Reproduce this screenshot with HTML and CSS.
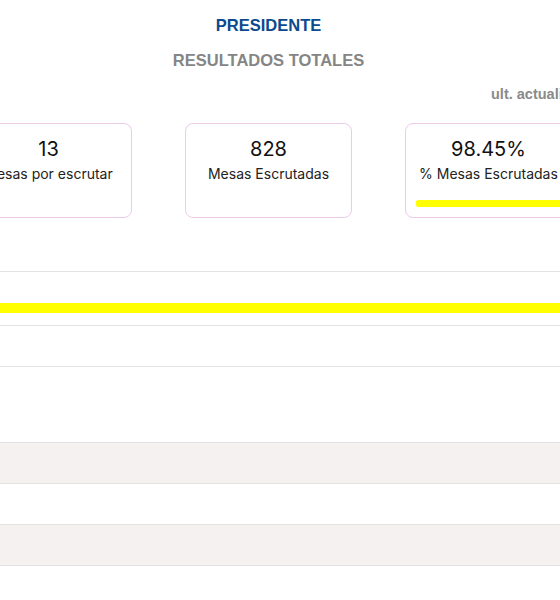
FILE: index.html
```
<!DOCTYPE html>
<html lang="es">
<head>
    <meta charset="UTF-8">
    <meta name="viewport" content="width=device-width, initial-scale=1.0">
    <title>Resultados Presidente</title>
    <link rel="stylesheet" href="styles.css">
</head>
<body>
    <div class="page">
        <h1 class="title">PRESIDENTE</h1>
        <h2 class="subtitle">RESULTADOS TOTALES</h2>
        <div class="updated">ult. actualización</div>

        <div class="cards">
            <div class="card">
                <div class="card-value">13</div>
                <div class="card-label">Mesas por escrutar</div>
            </div>
            <div class="card">
                <div class="card-value">828</div>
                <div class="card-label">Mesas Escrutadas</div>
            </div>
            <div class="card">
                <div class="card-value">98.45%</div>
                <div class="card-label">% Mesas Escrutadas</div>
                <div class="progress"><div class="progress-fill" style="width: 98.45%"></div></div>
            </div>
        </div>

        <div class="results">
            <div class="row row-bar"><div class="bar" style="width: 100%"></div></div>
            <div class="row"></div>
            <div class="row row-tall"></div>
            <div class="row shaded"></div>
            <div class="row"></div>
            <div class="row shaded"></div>
            <div class="row"></div>
        </div>
    </div>
</body>
</html>
```
FILE: styles.css
```
html, body {
    margin: 0;
    overflow: hidden;
    background: #fff;
}

body {
    font-family: "Liberation Sans", Arial, sans-serif;
    color: #111;
}

.page {
    width: 607px;
    margin-left: -35px;
}

.title {
    margin: 0;
    padding-top: 15px;
    font-size: 16.5px;
    line-height: 20px;
    font-weight: bold;
    color: #0b4a8e;
    text-align: center;
}

.subtitle {
    margin: 15px 0 0;
    font-size: 16.5px;
    line-height: 20px;
    font-weight: bold;
    color: #858585;
    text-align: center;
}

.updated {
    margin-top: 15px;
    padding-left: 526px;
    font-size: 14.5px;
    line-height: 18px;
    font-weight: bold;
    color: #8a8a8a;
    white-space: nowrap;
}

.cards {
    display: flex;
    justify-content: center;
    gap: 53px;
    margin-top: 20px;
}

.card {
    box-sizing: border-box;
    width: 167px;
    height: 95px;
    padding: 12px 8px 0;
    border: 1px solid #eccaea;
    border-radius: 8px;
    text-align: center;
    font-family: Inter, "Noto Sans", sans-serif;
}

.card-value {
    font-size: 20px;
    line-height: 26px;
    color: #111;
}

.card-label {
    font-size: 14px;
    line-height: 24px;
    color: #222;
    white-space: nowrap;
}

.progress {
    margin-top: 14px;
    margin-left: 2px;
    height: 7px;
    border-radius: 2px;
    overflow: hidden;
}

.progress-fill {
    height: 100%;
    background: #ffff00;
}

.results {
    margin-top: 53px;
    border-top: 1px solid #e3e3e3;
}

.row {
    box-sizing: border-box;
    height: 41px;
    border-bottom: 1px solid #e3e3e3;
}

.row-bar {
    height: 54px;
    padding-top: 31px;
}

.bar {
    height: 10px;
    background: #ffff00;
}

.row-tall {
    height: 76px;
}

.shaded {
    background: #f5f1f0;
}
```
